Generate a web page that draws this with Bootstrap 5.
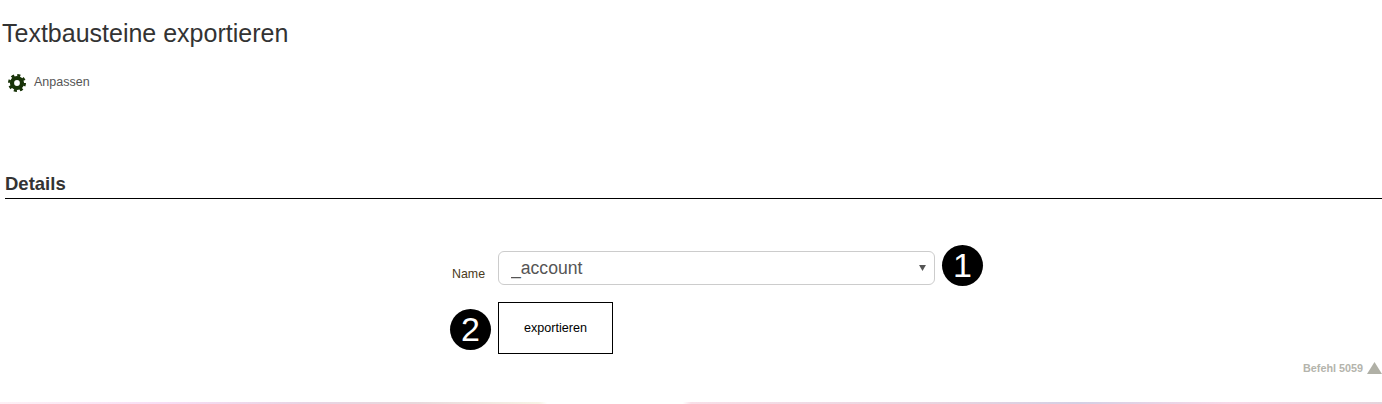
<!DOCTYPE html>
<html lang="de">
<head>
<meta charset="utf-8">
<title>Textbausteine exportieren</title>
<link rel="stylesheet" href="https://cdn.jsdelivr.net/npm/bootstrap@5.3.0/dist/css/bootstrap.min.css">
<style>
html,body{height:404px;overflow:hidden}
body{font-family:"Liberation Sans",Arial,sans-serif;color:#333;background:#fff;position:relative}
.page-title{font-size:25px;line-height:28px;font-weight:400;color:#333;margin:0;padding:19px 0 0 2px}
.customize{padding:27px 0 0 8px;height:92px;font-size:12.5px;color:#555;gap:8px}
.customize span{line-height:14px;margin-top:1px}
.section-head{font-size:18.5px;line-height:21px;font-weight:700;color:#333;margin:0 0 0 5px;padding:34px 0 4px;border-bottom:1px solid #000}
.form-area{padding:52px 0 0 450px}
.field-row{height:34px}
.name-label{width:48px;padding-left:2px;font-size:12.4px;line-height:14px;color:#4a3a20;margin:16px 0 0 0}
.name-select.form-select{width:437px;height:34px;padding:0 30px 0 12px;font-family:inherit;font-size:17.6px;color:#555;border:1px solid #ccc;border-radius:6px;background-size:7px 6px;background-position:right 8px center;background-image:url("data:image/svg+xml,%3Csvg xmlns='http://www.w3.org/2000/svg' viewBox='0 0 8 7'%3E%3Cpath fill='%23555' d='M0 0h8L4 7z'/%3E%3C/svg%3E")}
.marker{width:41px;height:41px;background:#000;color:#fff;font-size:34px;line-height:41px;text-align:center;border-radius:50%;flex:none}
.marker-one{margin:-6px 0 0 7px}
.action-row{margin-top:17px}
.marker-two{margin:7px 7px 0 0}
.export-btn{width:115px;height:52px;background:#fff;border:1px solid #000;border-radius:0;color:#000;font-size:12.6px;padding:1px 0 0}
.command{position:absolute;right:0;top:361px;font-size:10.8px;line-height:14px;font-weight:700;color:#b4b4ac;gap:4px}
.glow-line{position:absolute;left:0;right:0;top:402px;height:2px;background:linear-gradient(90deg,#fdf0f5 0,#f8dcf4 12%,#e8d4e4 22%,#e8d8dc 30%,#f7f3e6 39%,#fff 39.6%,#fff 49.4%,#f8dfe8 50%,#e8d4e0 68%,#d4cfe4 78%,#f8d8e8 89%,#e4d4dc 100%)}
</style>
</head>
<body>
<h1 class="page-title">Textbausteine exportieren</h1>
<div class="customize d-flex align-items-start">
  <svg width="18" height="18" viewBox="0 0 18 18" aria-hidden="true">
    <circle cx="9" cy="9" r="5" fill="none" stroke="#183308" stroke-width="4.2"/>
    <circle cx="9" cy="9" r="7.7" fill="none" stroke="#183308" stroke-width="2.6" stroke-dasharray="3.05 3"/>
  </svg>
  <span>Anpassen</span>
</div>
<h2 class="section-head">Details</h2>
<div class="form-area">
  <div class="field-row d-flex align-items-start">
    <label class="name-label" for="nm">Name</label>
    <select id="nm" class="form-select name-select"><option>_account</option></select>
    <div class="marker marker-one">1</div>
  </div>
  <div class="action-row d-flex align-items-start">
    <div class="marker marker-two">2</div>
    <button type="button" class="btn export-btn">exportieren</button>
  </div>
</div>
<div class="command d-flex align-items-center">
  <span>Befehl 5059</span>
  <svg width="15" height="12" viewBox="0 0 15 12" aria-hidden="true"><path fill="#b0b0a6" d="M7.5 0 15 12H0z"/></svg>
</div>
<div class="glow-line"></div>
</body>
</html>
